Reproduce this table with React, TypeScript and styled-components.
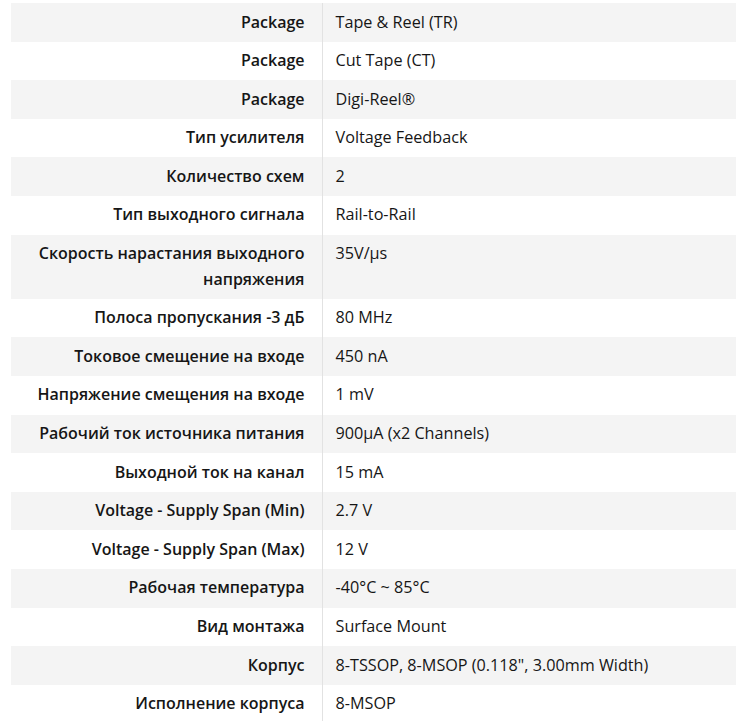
import styled, { createGlobalStyle } from "styled-components";

interface Spec {
  label: string;
  value: string;
}

const specs: Spec[] = [
  { label: "Package", value: "Tape & Reel (TR)" },
  { label: "Package", value: "Cut Tape (CT)" },
  { label: "Package", value: "Digi-Reel®" },
  { label: "Тип усилителя", value: "Voltage Feedback" },
  { label: "Количество схем", value: "2" },
  { label: "Тип выходного сигнала", value: "Rail-to-Rail" },
  { label: "Скорость нарастания выходного напряжения", value: "35V/µs" },
  { label: "Полоса пропускания -3 дБ", value: "80 MHz" },
  { label: "Токовое смещение на входе", value: "450 nA" },
  { label: "Напряжение смещения на входе", value: "1 mV" },
  { label: "Рабочий ток источника питания", value: "900µA (x2 Channels)" },
  { label: "Выходной ток на канал", value: "15 mA" },
  { label: "Voltage - Supply Span (Min)", value: "2.7 V" },
  { label: "Voltage - Supply Span (Max)", value: "12 V" },
  { label: "Рабочая температура", value: "-40°C ~ 85°C" },
  { label: "Вид монтажа", value: "Surface Mount" },
  { label: "Корпус", value: "8-TSSOP, 8-MSOP (0.118\", 3.00mm Width)" },
  { label: "Исполнение корпуса", value: "8-MSOP" },
];

const App = () => {
  return (
    <>
      <GlobalStyle />
      <SpecTable>
        <tbody>
          {specs.map((spec, i) => (
            <Row key={i} $striped={i % 2 === 0}>
              <Label>{spec.label}</Label>
              <Value>{spec.value}</Value>
            </Row>
          ))}
        </tbody>
      </SpecTable>
    </>
  );
};

export default App;

const GlobalStyle = createGlobalStyle`
  body {
    margin: 0;
    background: #fff;
    font-family: "Open Sans", "Noto Sans", sans-serif;
    color: #161616;
  }
`;

const SpecTable = styled.table`
  width: calc(100% - 11px);
  margin: 3px 0 0 11px;
  border-collapse: collapse;
  font-size: 16px;
  line-height: 25.6px;
`;

const Row = styled.tr<{ $striped: boolean }>`
  background: ${(p) => (p.$striped ? "#f4f4f4" : "#fff")};
`;

const Label = styled.td`
  width: 311px;
  box-sizing: border-box;
  padding: 6.5px 17px 6.5px 16px;
  text-align: right;
  vertical-align: top;
  font-weight: 600;
  border-right: 1px solid #e2e2e2;
`;

const Value = styled.td`
  padding: 6.5px 13px;
  vertical-align: top;
  font-size: 16.2px;
`;
